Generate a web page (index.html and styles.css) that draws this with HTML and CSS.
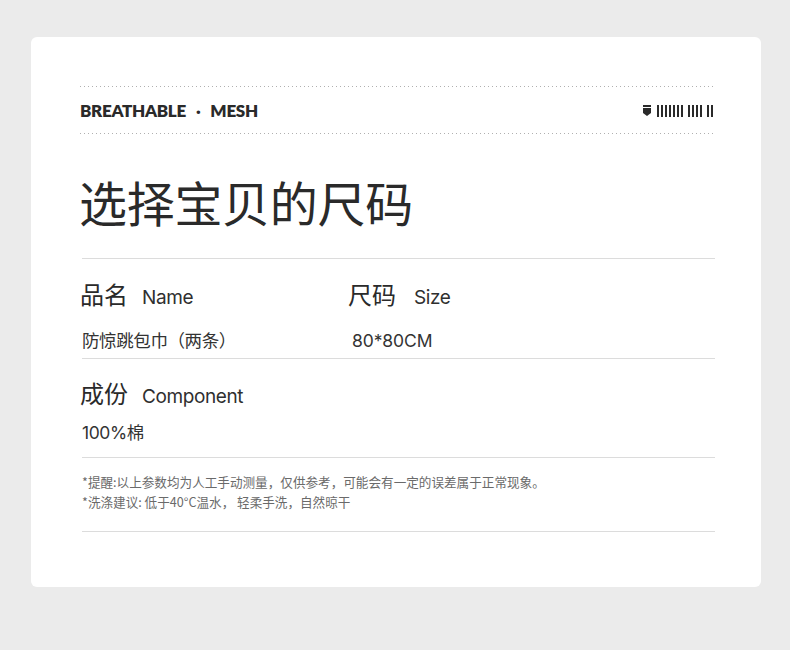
FILE: index.html
```html
<!DOCTYPE html>
<html lang="zh">
<head>
<meta charset="utf-8">
<title>选择宝贝的尺码</title>
<link rel="stylesheet" href="styles.css">
</head>
<body>
<div class="stage">
  <section class="card">
    <div class="dots"></div>
    <header class="brand">
      <div class="brand-text"><span>BREATHABLE</span><span class="mid">·</span><span>MESH</span></div>
      <div class="code">
        <svg class="shield" width="8" height="12" viewBox="0 0 8 12"><path d="M0 0H8V2H0Z M0 3H8V8L4 11L0 8Z" fill="#2a2a2a"/></svg>
        <div class="bars g7"><i></i><i></i><i></i><i></i><i></i><i></i><i></i></div>
        <div class="bars"><i></i><i></i><i></i><i></i></div>
        <div class="bars"><i></i><i></i></div>
      </div>
    </header>
    <div class="dots"></div>

    <h1 class="title">选择宝贝的尺码</h1>

    <div class="rule"></div>
    <div class="grid">
      <div class="cell">
        <div class="label"><span class="cn">品名</span><span class="en">Name</span></div>
        <div class="value">防惊跳包巾（两条）</div>
      </div>
      <div class="cell">
        <div class="label"><span class="cn">尺码</span><span class="en">Size</span></div>
        <div class="value latin">80*80CM</div>
      </div>
    </div>
    <div class="rule"></div>
    <div class="block">
      <div class="label"><span class="cn">成份</span><span class="en">Component</span></div>
      <div class="value">100%棉</div>
    </div>
    <div class="rule"></div>
    <div class="notes">
      <p>*提醒:以上参数均为人工手动测量，仅供参考，可能会有一定的误差属于正常现象。</p>
      <p>*洗涤建议: 低于40°C温水， 轻柔手洗，自然晾干</p>
    </div>
    <div class="rule"></div>
  </section>
</div>
</body>
</html>
```

FILE: styles.css
```css
* { box-sizing: border-box; margin: 0; padding: 0; }
html, body { background: #ffffff; }
body {
  font-family: "Inter", "Noto Sans CJK SC", "Noto Sans", sans-serif;
  color: #2b2b2b;
}
.stage {
  background: #ebebeb;
  height: 650px;
  padding: 37px 29px 0 31px;
}
.card {
  background: #ffffff;
  border-radius: 6px;
  height: 550px;
  width: 730px;
  padding: 49px 46px 0 49px;
}
.dots {
  height: 1px;
  background-image: linear-gradient(to right, #b0b0b0 0 1px, transparent 1px 4px);
  background-size: 4px 1px;
  background-repeat: repeat-x;
  margin-right: 2px;
}
.brand {
  height: 46px;
  display: flex;
  align-items: center;
  justify-content: space-between;
  padding-right: 2px;
}
.brand-text {
  font-family: "Lato", "DejaVu Sans", sans-serif;
  font-weight: 800;
  font-size: 17px;
  letter-spacing: -0.3px;
  color: #2a2a2a;
  display: flex;
  align-items: center;
  gap: 10px;
  padding-top: 1px;
}
.brand-text .mid { font-weight: 900; }
.code {
  display: flex;
  align-items: center;
  gap: 5px;
  padding-top: 1px;
}
.shield { display: block; margin-right: 1px; }
.bars { display: flex; gap: 2px; }
.bars i {
  display: block;
  width: 2px;
  height: 12px;
  background: #2a2a2a;
}
.title {
  font-family: "Noto Sans CJK SC", sans-serif;
  font-weight: 400;
  font-size: 48px;
  line-height: 47px;
  height: 47px;
  margin: 44px 0 33px -1px;
  color: #2a2a2a;
  letter-spacing: -0.3px;
}
.rule {
  height: 1px;
  background: #dcdcdc;
  margin-left: 2px;
}
.grid {
  display: grid;
  grid-template-columns: 268px 1fr;
  padding: 23px 0 9px;
}
.label {
  display: flex;
  align-items: baseline;
  height: 24px;
  line-height: 24px;
}
.label .cn { font-size: 24px; color: #2a2a2a; font-family: "Noto Sans CJK SC", sans-serif; }
.label .en {
  font-size: 19px;
  margin-left: 14px;
  color: #2f2f2f;
  letter-spacing: -0.4px;
}
.cell:nth-child(2) .label .en { margin-left: 18px; }
.value {
  font-size: 17.5px;
  line-height: 17px;
  margin-top: 26px;
  margin-left: 2px;
  color: #333;
  letter-spacing: -0.4px;
}
.value.latin { letter-spacing: -0.1px; }
.cell:nth-child(2) .value { margin-left: 4px; }
.block { padding: 22px 0 16px; }
.block .value { margin-top: 19px; }
.notes {
  padding: 14px 0 19px 2px;
  font-family: "Noto Sans CJK SC", sans-serif;
  font-size: 12.6px;
  line-height: 20px;
  color: #6a6a6a;
}
```
